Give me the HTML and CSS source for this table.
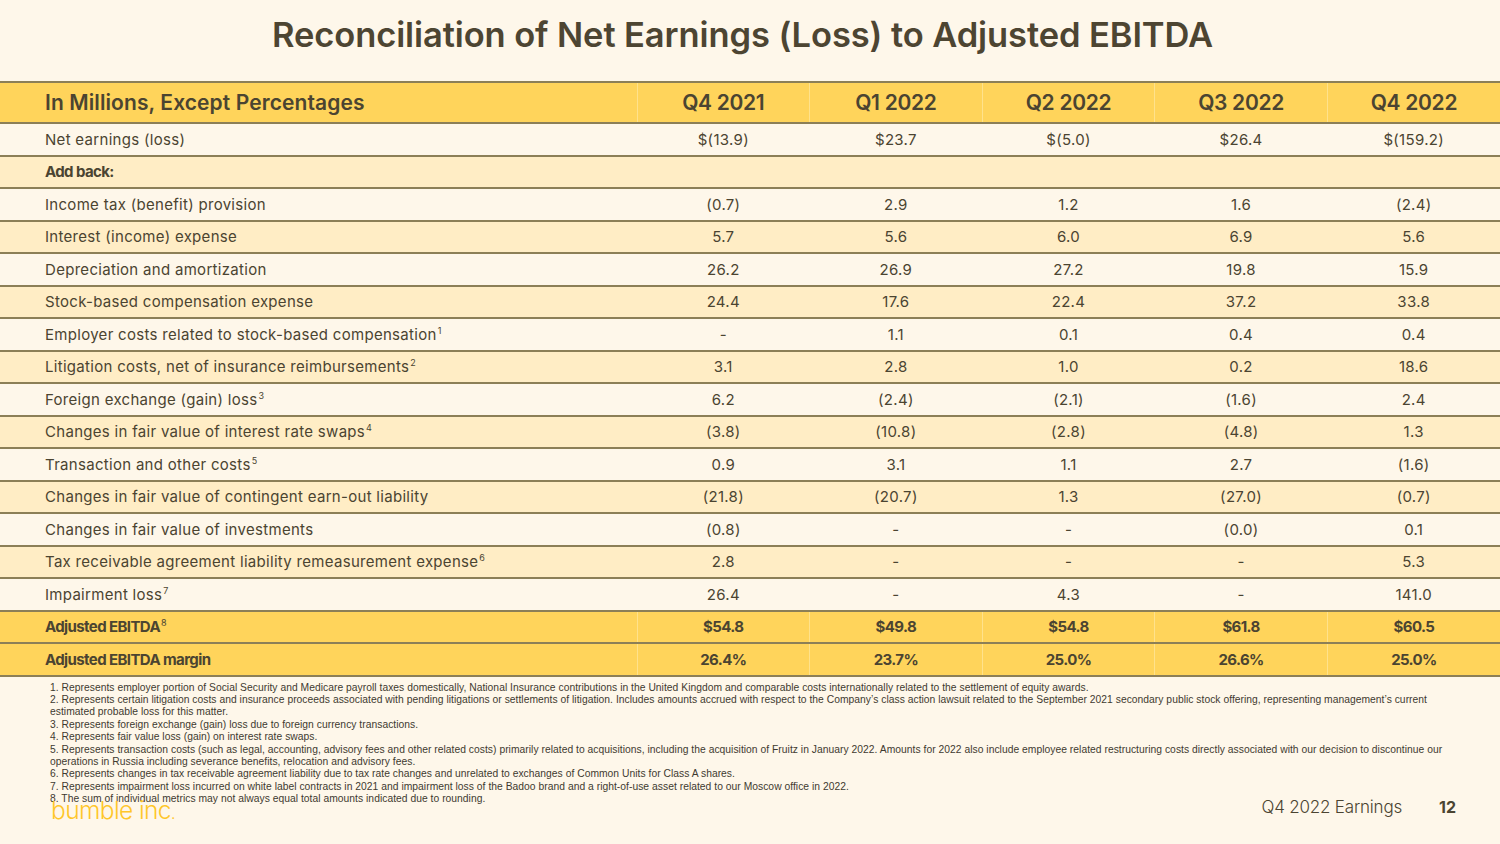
FILE: index.html
```html
<!DOCTYPE html>
<html>
<head>
<meta charset="utf-8">
<link rel="stylesheet" href="styles.css">
</head>
<body>
<div class="slide">
  <h1 class="title">Reconciliation of Net Earnings (Loss) to Adjusted EBITDA</h1>
  <table class="recon">
    <thead>
      <tr class="head">
        <th class="label">In Millions, Except Percentages</th>
        <th>Q4 2021</th><th>Q1 2022</th><th>Q2 2022</th><th>Q3 2022</th><th>Q4 2022</th>
      </tr>
    </thead>
    <tbody>
      <tr class="light"><td class="label">Net earnings (loss)</td><td>$(13.9)</td><td>$23.7</td><td>$(5.0)</td><td>$26.4</td><td>$(159.2)</td></tr>
      <tr class="tint bold"><td class="label">Add back:</td><td></td><td></td><td></td><td></td><td></td></tr>
      <tr class="light"><td class="label">Income tax (benefit) provision</td><td>(0.7)</td><td>2.9</td><td>1.2</td><td>1.6</td><td>(2.4)</td></tr>
      <tr class="tint"><td class="label">Interest (income) expense</td><td>5.7</td><td>5.6</td><td>6.0</td><td>6.9</td><td>5.6</td></tr>
      <tr class="light"><td class="label">Depreciation and amortization</td><td>26.2</td><td>26.9</td><td>27.2</td><td>19.8</td><td>15.9</td></tr>
      <tr class="tint"><td class="label">Stock-based compensation expense</td><td>24.4</td><td>17.6</td><td>22.4</td><td>37.2</td><td>33.8</td></tr>
      <tr class="light"><td class="label">Employer costs related to stock-based compensation<sup>1</sup></td><td>-</td><td>1.1</td><td>0.1</td><td>0.4</td><td>0.4</td></tr>
      <tr class="tint"><td class="label">Litigation costs, net of insurance reimbursements<sup>2</sup></td><td>3.1</td><td>2.8</td><td>1.0</td><td>0.2</td><td>18.6</td></tr>
      <tr class="light"><td class="label">Foreign exchange (gain) loss<sup>3</sup></td><td>6.2</td><td>(2.4)</td><td>(2.1)</td><td>(1.6)</td><td>2.4</td></tr>
      <tr class="tint"><td class="label">Changes in fair value of interest rate swaps<sup>4</sup></td><td>(3.8)</td><td>(10.8)</td><td>(2.8)</td><td>(4.8)</td><td>1.3</td></tr>
      <tr class="light"><td class="label">Transaction and other costs<sup>5</sup></td><td>0.9</td><td>3.1</td><td>1.1</td><td>2.7</td><td>(1.6)</td></tr>
      <tr class="tint"><td class="label">Changes in fair value of contingent earn-out liability</td><td>(21.8)</td><td>(20.7)</td><td>1.3</td><td>(27.0)</td><td>(0.7)</td></tr>
      <tr class="light"><td class="label">Changes in fair value of investments</td><td>(0.8)</td><td>-</td><td>-</td><td>(0.0)</td><td>0.1</td></tr>
      <tr class="tint"><td class="label">Tax receivable agreement liability remeasurement expense<sup>6</sup></td><td>2.8</td><td>-</td><td>-</td><td>-</td><td>5.3</td></tr>
      <tr class="light"><td class="label">Impairment loss<sup>7</sup></td><td>26.4</td><td>-</td><td>4.3</td><td>-</td><td>141.0</td></tr>
      <tr class="total bold"><td class="label">Adjusted EBITDA<sup>8</sup></td><td>$54.8</td><td>$49.8</td><td>$54.8</td><td>$61.8</td><td>$60.5</td></tr>
      <tr class="total bold"><td class="label">Adjusted EBITDA margin</td><td>26.4%</td><td>23.7%</td><td>25.0%</td><td>26.6%</td><td>25.0%</td></tr>
    </tbody>
  </table>
  <div class="notes">
    <p>1. Represents employer portion of Social Security and Medicare payroll taxes domestically, National Insurance contributions in the United Kingdom and comparable costs internationally related to the settlement of equity awards.</p>
    <p>2. Represents certain litigation costs and insurance proceeds associated with pending litigations or settlements of litigation. Includes amounts accrued with respect to the Company’s class action lawsuit related to the September 2021 secondary public stock offering, representing management’s current<br>estimated probable loss for this matter.</p>
    <p>3. Represents foreign exchange (gain) loss due to foreign currency transactions.</p>
    <p>4. Represents fair value loss (gain) on interest rate swaps.</p>
    <p>5. Represents transaction costs (such as legal, accounting, advisory fees and other related costs) primarily related to acquisitions, including the acquisition of Fruitz in January 2022. Amounts for 2022 also include employee related restructuring costs directly associated with our decision to discontinue our<br>operations in Russia including severance benefits, relocation and advisory fees.</p>
    <p>6. Represents changes in tax receivable agreement liability due to tax rate changes and unrelated to exchanges of Common Units for Class A shares.</p>
    <p>7. Represents impairment loss incurred on white label contracts in 2021 and impairment loss of the Badoo brand and a right-of-use asset related to our Moscow office in 2022.</p>
    <p>8. The sum of individual metrics may not always equal total amounts indicated due to rounding.</p>
  </div>
  <div class="footer">
    <span class="logo">bumble inc<span class="dot">.</span></span>
    <div class="footer-right">
      <span class="deck">Q4 2022 Earnings</span>
      <span class="page">12</span>
    </div>
  </div>
</div>
</body>
</html>
```

FILE: styles.css
```css
* { box-sizing: border-box; }
html, body { margin: 0; padding: 0; }
body {
  background: #fef7ea;
  font-family: "Inter", "Noto Sans", sans-serif;
  color: #4b4431;
}
.slide {
  width: 1500px;
  height: 844px;
  display: flex;
  flex-direction: column;
  overflow: hidden;
}
.title {
  margin: 0;
  height: 81px;
  padding: 14px 15px 0 0;
  text-align: center;
  font-size: 34.5px;
  font-weight: 600;
  letter-spacing: -0.1px;
  color: #4d4532;
}
.recon {
  width: 1500px;
  border-collapse: collapse;
  table-layout: fixed;
  flex: none;
}
.recon th, .recon td {
  padding: 0;
  text-align: center;
  border-bottom: 2px solid #8c7f57;
  white-space: nowrap;
}
.recon th:not(.label), .recon td:not(.label) { width: 172.6px; }
.recon .label { text-align: left; padding-left: 45px; width: 637px; }
.head th {
  height: 41px;
  background: #ffd45b;
  border-top: 2px solid #8c7f57;
  font-size: 21px;
  font-weight: 600;
  letter-spacing: 0.1px;
  color: #4b4431;
}
.head th:not(.label) { letter-spacing: -0.3px; }
.head th + th, .total td + td { border-left: 1px solid #ffe28c; }
.recon tbody td {
  height: 32.5px;
  font-size: 15px;
  font-weight: 400;
  letter-spacing: 0.3px;
  color: #4b4431;
}
.recon .light td { background: #fef7ea; }
.recon .tint td { background: #ffedc5; }
.recon .total td { background: #ffd45b; }
.recon .bold td { font-weight: 700; letter-spacing: -0.6px; }
sup {
  font-size: 9px;
  font-weight: 400;
  vertical-align: 6px;
  line-height: 0;
  margin-left: 1px;
}
.notes {
  flex: none;
  height: 130px;
  padding: 5px 30px 0 50px;
  font-family: "Liberation Sans", Arial, sans-serif;
  font-size: 10.3px;
  line-height: 12.4px;
  letter-spacing: 0.03px;
  color: #3e3a30;
}
.notes p { margin: 0; }
.footer {
  display: flex;
  align-items: flex-end;
  justify-content: space-between;
  padding: 0 44px 0 51px;
  margin-top: -10px;
}
.logo {
  font-family: "Inter", sans-serif;
  font-weight: 300;
  font-size: 24.5px;
  letter-spacing: -0.6px;
  color: #ffc629;
  line-height: 24px;
}
.logo .dot { font-size: 16px; }
.footer-right {
  display: flex;
  align-items: baseline;
  gap: 37px;
  padding-bottom: 8px;
}
.deck {
  font-size: 17px;
  font-weight: 300;
  color: #4b4431;
  letter-spacing: -0.2px;
}
.page {
  font-size: 16px;
  font-weight: 700;
  color: #4b4431;
}
```
